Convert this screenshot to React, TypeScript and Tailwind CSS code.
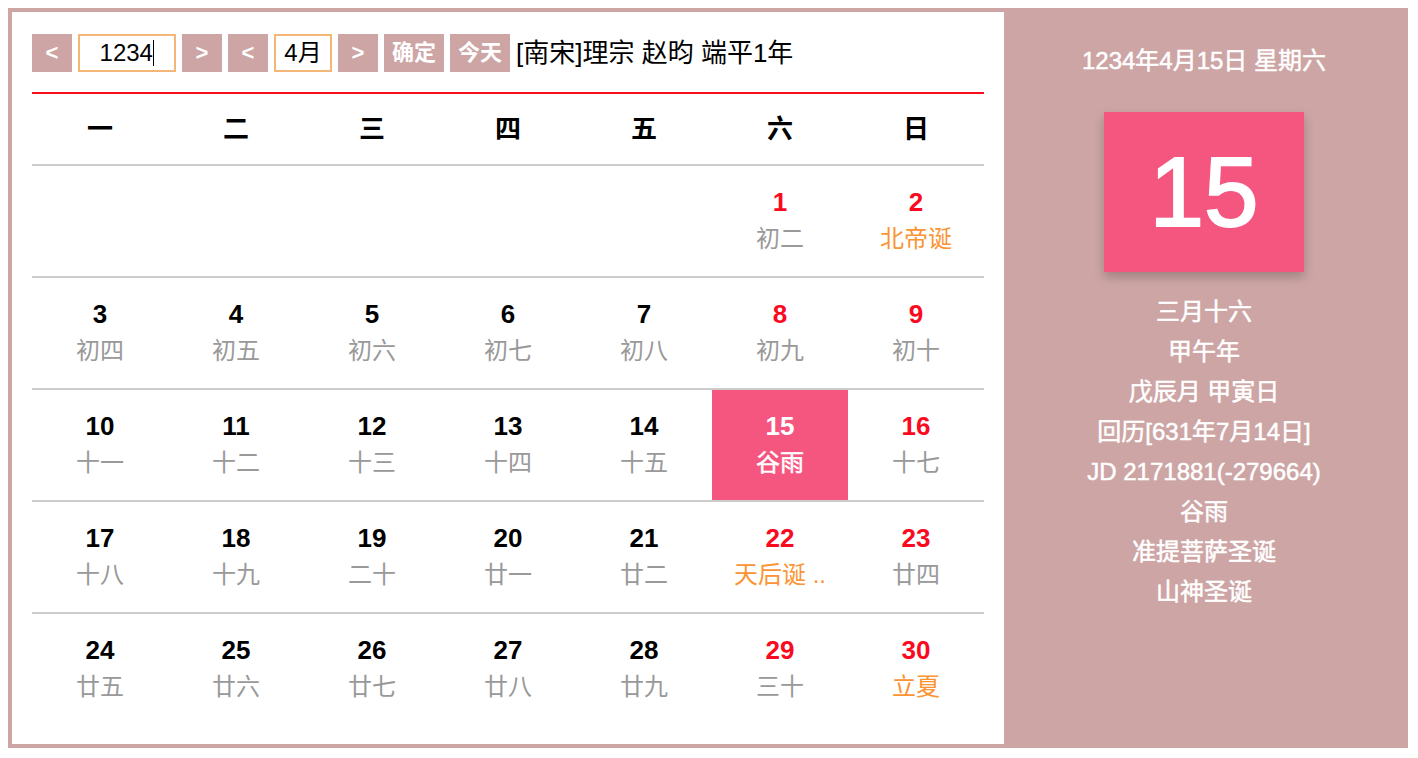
import React from 'react';

type Day = { d: number; lunar: string; red?: boolean; special?: boolean; selected?: boolean } | null;

const WEEKDAYS = ['一', '二', '三', '四', '五', '六', '日'];

const WEEKS: Day[][] = [
  [null, null, null, null, null, { d: 1, lunar: '初二', red: true }, { d: 2, lunar: '北帝诞', red: true, special: true }],
  [
    { d: 3, lunar: '初四' },
    { d: 4, lunar: '初五' },
    { d: 5, lunar: '初六' },
    { d: 6, lunar: '初七' },
    { d: 7, lunar: '初八' },
    { d: 8, lunar: '初九', red: true },
    { d: 9, lunar: '初十', red: true },
  ],
  [
    { d: 10, lunar: '十一' },
    { d: 11, lunar: '十二' },
    { d: 12, lunar: '十三' },
    { d: 13, lunar: '十四' },
    { d: 14, lunar: '十五' },
    { d: 15, lunar: '谷雨', red: true, selected: true },
    { d: 16, lunar: '十七', red: true },
  ],
  [
    { d: 17, lunar: '十八' },
    { d: 18, lunar: '十九' },
    { d: 19, lunar: '二十' },
    { d: 20, lunar: '廿一' },
    { d: 21, lunar: '廿二' },
    { d: 22, lunar: '天后诞 ..', red: true, special: true },
    { d: 23, lunar: '廿四', red: true },
  ],
  [
    { d: 24, lunar: '廿五' },
    { d: 25, lunar: '廿六' },
    { d: 26, lunar: '廿七' },
    { d: 27, lunar: '廿八' },
    { d: 28, lunar: '廿九' },
    { d: 29, lunar: '三十', red: true },
    { d: 30, lunar: '立夏', red: true, special: true },
  ],
];

const INFO = ['三月十六', '甲午年', '戊辰月 甲寅日', '回历[631年7月14日]', 'JD 2171881(-279664)', '谷雨', '准提菩萨圣诞', '山神圣诞'];

const NavButton: React.FC<{ label: string; wide?: boolean }> = ({ label, wide }) => (
  <button
    className={`h-[38px] ${wide ? 'w-[60px]' : 'w-[40px]'} text-[22px] bg-[#cda5a5] text-white font-bold flex items-center justify-center leading-none`}
  >
    {label}
  </button>
);

const FakeInput: React.FC<{ value: string; width: string; caret?: boolean }> = ({ value, width, caret }) => (
  <div className={`h-[38px] ${width} border-2 border-[#f4b677] bg-white flex items-center justify-center text-[24px] text-black`}>
    <span>{value}</span>
    {caret && <span className="inline-block w-[1.5px] h-[26px] bg-black"></span>}
  </div>
);

const DayCell: React.FC<{ day: Day }> = ({ day }) => {
  if (!day) return <div className="h-[110px]"></div>;
  const numColor = day.selected ? 'text-white' : day.red ? 'text-[#fa0a1e]' : 'text-black';
  const lunarColor = day.selected ? 'text-white' : day.special ? 'text-[#fb9433]' : 'text-[#999]';
  return (
    <div className={`h-[110px] flex flex-col items-center pt-[21px] ${day.selected ? 'bg-[#f5567f]' : ''}`}>
      <div className={`text-[26px] leading-[30px] font-bold ${numColor}`}>{day.d}</div>
      <div className={`text-[24px] leading-[30px] mt-[7px] whitespace-nowrap ${lunarColor} ${day.selected ? '[-webkit-text-stroke:0.5px_white]' : ''}`}>{day.lunar}</div>
    </div>
  );
};

export default function App() {
  return (
    <div className="p-2 font-['Liberation_Sans','Noto_Sans_CJK_SC',sans-serif]">
      <div className="w-[1400px] h-[740px] bg-[#cda5a5] p-[4px] flex">
        <div className="w-[992px] h-[732px] bg-white pt-[22px] px-[20px] pb-[20px] flex flex-col">
          <div className="h-[38px] mb-[20px] flex items-center gap-[6px]">
            <NavButton label="<" />
            <FakeInput value="1234" width="w-[98px]" caret />
            <NavButton label=">" />
            <NavButton label="<" />
            <FakeInput value="4月" width="w-[58px]" />
            <NavButton label=">" />
            <NavButton label="确定" wide />
            <NavButton label="今天" wide />
            <span className="text-[26px] text-black leading-none">[南宋]理宗 赵昀 端平1年</span>
          </div>

          <div className="border-t-2 border-[#f80d1d] grid grid-cols-7 h-[72px] items-center">
            {WEEKDAYS.map(w => (
              <div key={w} className="text-center text-[26px] font-bold text-black">{w}</div>
            ))}
          </div>

          {WEEKS.map((week, i) => (
            <div key={i} className="border-t-2 border-[#cccccc] grid grid-cols-7">
              {week.map((day, j) => <DayCell key={j} day={day} />)}
            </div>
          ))}
        </div>

        <div className="flex-1 flex flex-col items-center pt-[29px] text-white [-webkit-text-stroke:0.5px_white]">
          <div className="text-[24px] leading-[40px]">1234年4月15日 星期六</div>
          <div className="mt-[31px] w-[200px] h-[160px] bg-[#f5567f] shadow-[0_5px_10px_rgba(0,0,0,0.22)] flex items-center justify-center">
            <span className="text-[98px] leading-none [-webkit-text-stroke:2px_white]">15</span>
          </div>
          <div className="mt-[20px] flex flex-col items-center">
            {INFO.map(line => (
              <div key={line} className="text-[24px] leading-[40px]">{line}</div>
            ))}
          </div>
        </div>
      </div>
    </div>
  );
}
